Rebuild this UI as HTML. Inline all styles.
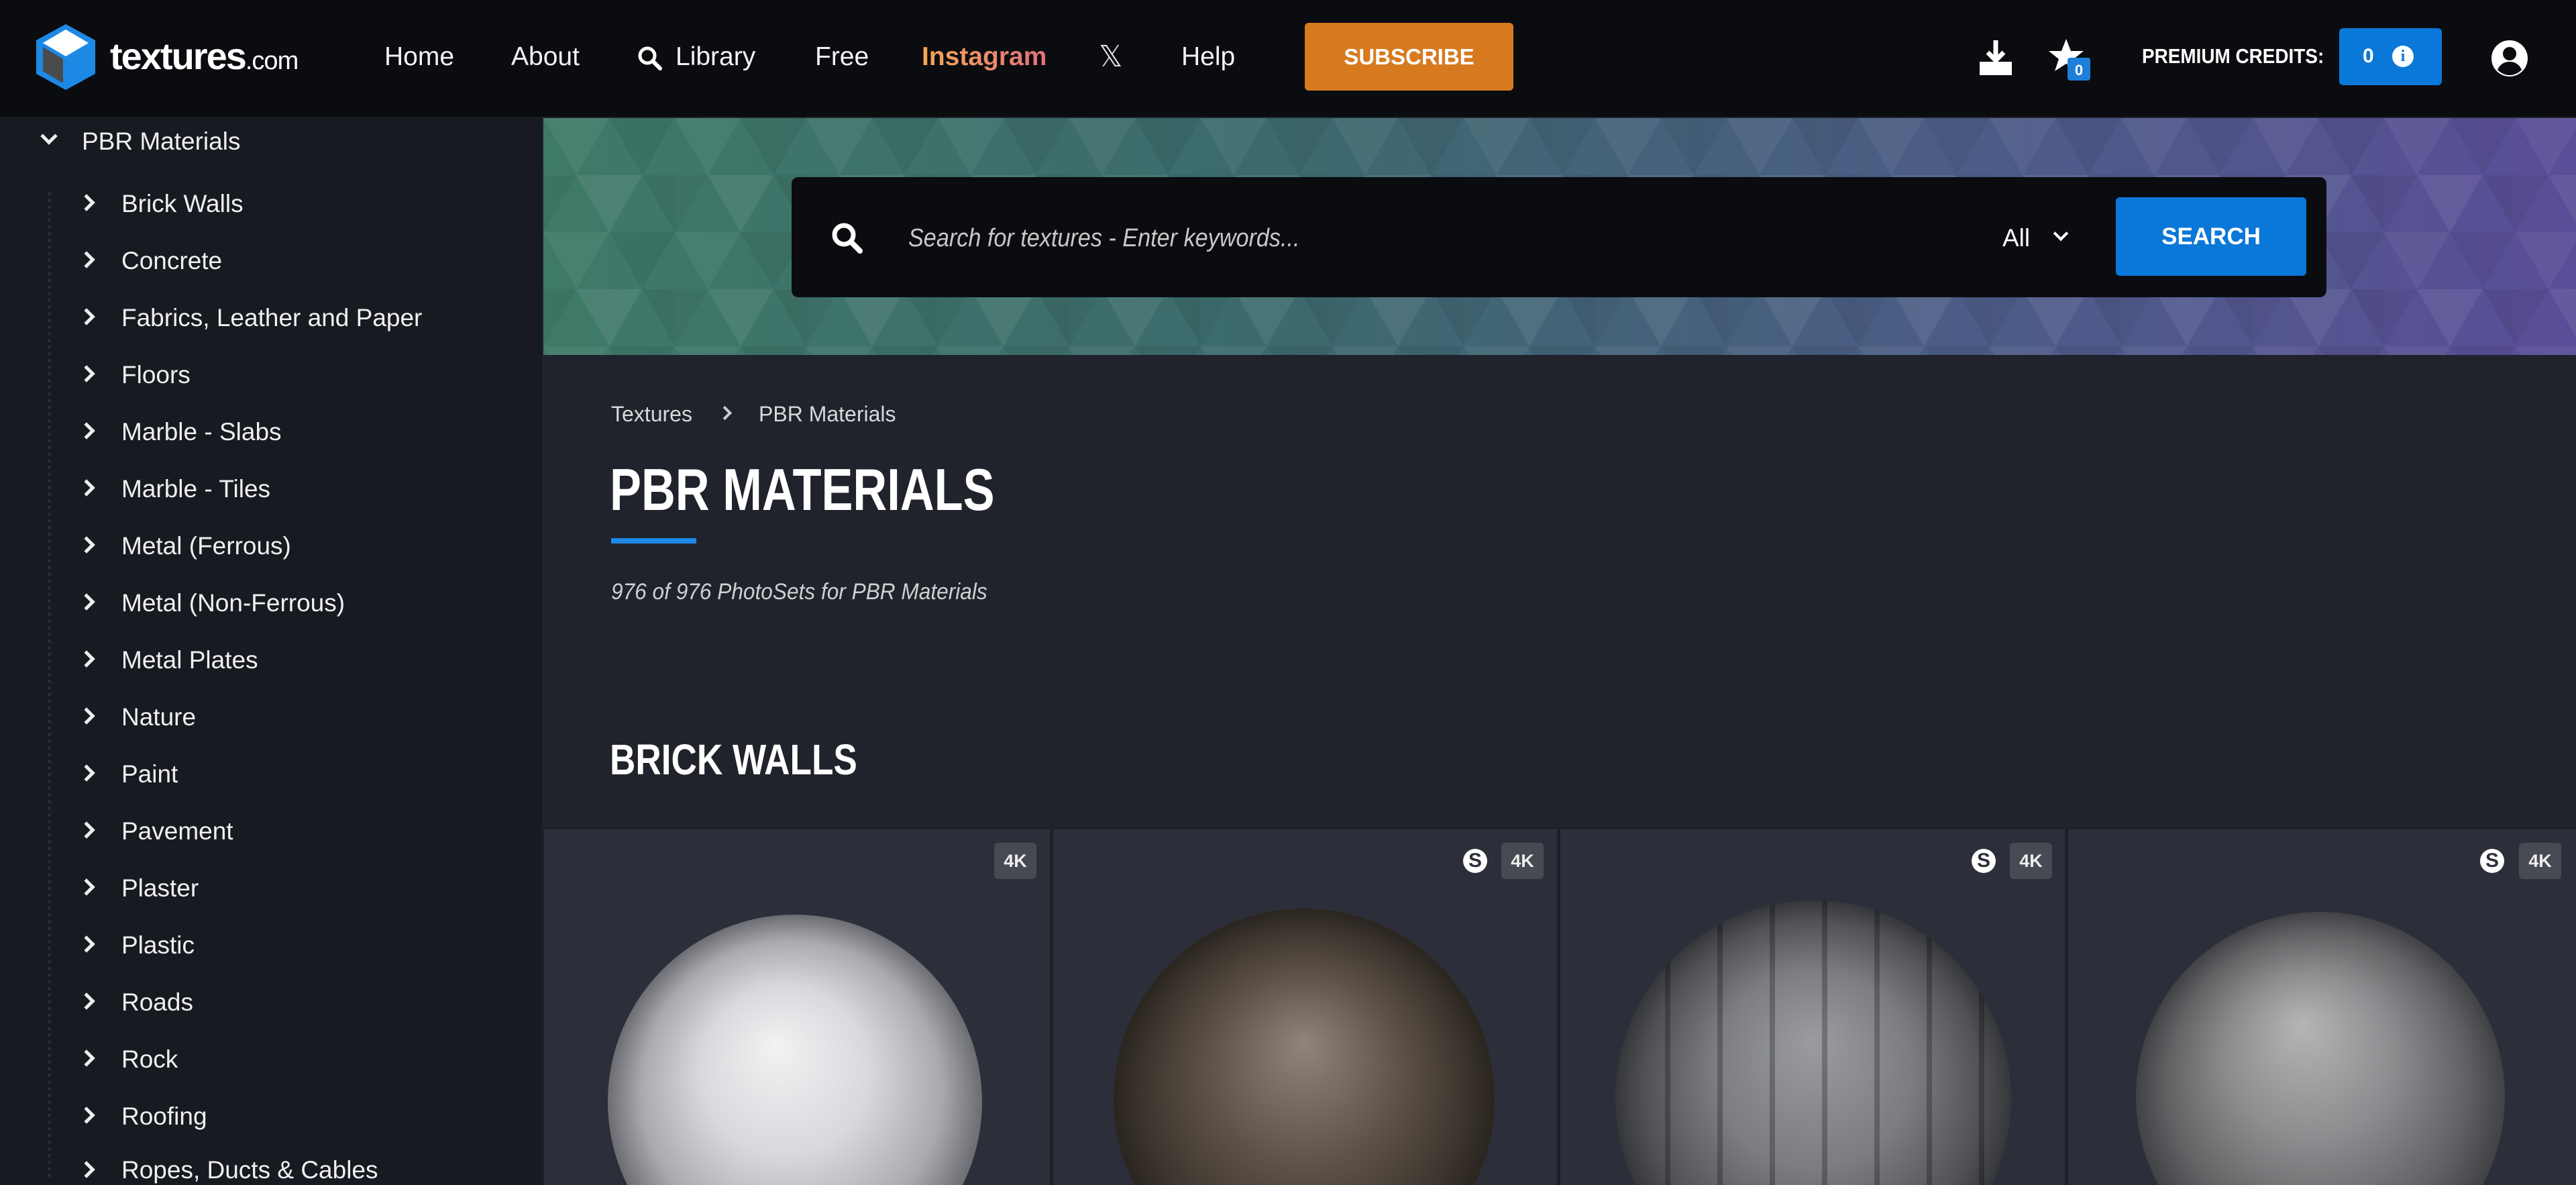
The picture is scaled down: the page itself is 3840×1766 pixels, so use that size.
<!DOCTYPE html>
<html style="width:3840px;height:1766px;overflow:hidden"><head><meta charset="utf-8">
<style>
*{margin:0;padding:0;box-sizing:border-box}
body{width:3840px;height:1766px;overflow:hidden;background:#20232c;font-family:"Liberation Sans",sans-serif;color:#fff}
#wrap{position:relative;width:3840px;height:1766px;overflow:hidden}
.abs{position:absolute}
.hdr{left:0;top:0;width:3840px;height:174px;background:#0b0c10}
.nav{top:60px;font-size:39px;line-height:50px;color:#f2f2f2}
.side{left:0;top:174px;width:808px;height:1592px;background:#181a21;overflow:hidden}
.si{left:0;font-size:37px;line-height:50px;height:50px;color:#f0f0f0;width:800px}
.si .ch{position:absolute;left:120px;top:14px;width:18px;height:18px;border-right:5px solid #eee;border-top:5px solid #eee;transform:rotate(45deg)}
.si span{position:absolute;left:181px;white-space:nowrap}
.cards{left:808px;top:1232px;width:3032px;height:534px;background:#1d2028;overflow:hidden}
.card{top:4px;height:530px;background:#2c2f39}
.b4k{width:63px;height:54px;background:#474a52;border-radius:6px;font-size:27px;font-weight:bold;text-align:center;line-height:54px;color:#eee}
.sic{width:36px;height:36px;border-radius:50%;background:#fff;color:#2c2f39;font-weight:bold;font-size:30px;text-align:center;line-height:36px}
.cond{transform:scaleX(0.8);transform-origin:0 0;white-space:nowrap}
</style></head><body><div id="wrap">
<div class="abs hdr"></div>
<svg class="abs" style="left:52px;top:34px" width="92" height="102" viewBox="0 0 92 102">
<polygon points="46,2 90,26 90,76 46,100 2,76 2,26" fill="#1e88e5"/>
<polygon points="46,10 80,30 46,50 12,30" fill="#fff"/>
<polygon points="12,36 42,54 42,90 12,72" fill="#4a4a4a"/>
</svg>
<div class="abs" style="left:164px;top:52px;font-size:56px;font-weight:bold;letter-spacing:-2px;line-height:64px">textures<span style="font-size:38px;letter-spacing:-1px;font-weight:normal">.com</span></div>
<div class="abs nav" style="left:573px">Home</div>
<div class="abs nav" style="left:762px">About</div>
<svg class="abs" style="left:950px;top:68px" width="38" height="38" viewBox="0 0 38 38"><circle cx="15" cy="15" r="11" fill="none" stroke="#fff" stroke-width="5"/><line x1="23" y1="23" x2="34" y2="34" stroke="#fff" stroke-width="6" stroke-linecap="round"/></svg>
<div class="abs nav" style="left:1007px">Library</div>
<div class="abs nav" style="left:1215px">Free</div>
<div class="abs nav" style="left:1374px;font-weight:bold;background:linear-gradient(90deg,#f5a855,#e2707c);-webkit-background-clip:text;color:transparent">Instagram</div>
<div class="abs nav" style="left:1638px;font-size:44px;color:#ddd">𝕏</div>
<div class="abs nav" style="left:1761px">Help</div>
<div class="abs" style="left:1945px;top:34px;width:311px;height:101px;background:#d77a1f;border-radius:6px;font-size:33px;font-weight:bold;text-align:center;line-height:101px">SUBSCRIBE</div>
<svg class="abs" style="left:2948px;top:58px" width="54" height="56" viewBox="0 0 54 56"><path d="M27 2v28M15 20l12 12 12-12" stroke="#fff" stroke-width="7" fill="none"/><rect x="3" y="34" width="48" height="20" fill="#fff"/></svg>
<svg class="abs" style="left:3054px;top:56px" width="66" height="66" viewBox="0 0 66 66"><polygon points="26,2 33,20 52,20 37,32 43,50 26,39 9,50 15,32 0,20 19,20" fill="#fff"/><rect x="28" y="30" width="34" height="34" rx="4" fill="#1e7fd8"/><text x="45" y="56" font-size="22" font-weight="bold" fill="#fff" text-anchor="middle" font-family="Liberation Sans">0</text></svg>
<div class="abs" style="left:3193px;top:62px;font-size:31px;font-weight:bold;line-height:44px;transform:scaleX(0.9);transform-origin:0 0;white-space:nowrap">PREMIUM CREDITS:</div>
<div class="abs" style="left:3487px;top:42px;width:153px;height:85px;background:#0a78d8;border-radius:6px"></div>
<div class="abs" style="left:3522px;top:62px;font-size:30px;font-weight:bold;line-height:44px">0</div>
<div class="abs" style="left:3566px;top:68px;width:32px;height:32px;border-radius:50%;background:#fff;color:#0a78d8;font-weight:bold;font-size:24px;text-align:center;line-height:32px;font-family:'Liberation Serif',serif">i</div>
<svg class="abs" style="left:3712px;top:58px" width="58" height="58" viewBox="0 0 58 58"><circle cx="29" cy="29" r="27" fill="#fff"/><circle cx="29" cy="22" r="10" fill="#0b0c10"/><path d="M11 46c4-9 11-12 18-12s14 3 18 12c-5 5-11 8-18 8s-13-3-18-8z" fill="#0b0c10"/></svg>

<div class="abs side">
<div class="abs" style="left:71px;top:112px;height:1470px;border-left:5px dotted #2a2d36"></div>
<div class="abs si" style="top:12px"><div class="ch" style="left:64px;top:8px;transform:rotate(135deg)"></div><span style="left:122px">PBR Materials</span></div>
<div class="abs si" style="top:105px"><div class="ch"></div><span>Brick Walls</span></div>
<div class="abs si" style="top:190px"><div class="ch"></div><span>Concrete</span></div>
<div class="abs si" style="top:275px"><div class="ch"></div><span>Fabrics, Leather and Paper</span></div>
<div class="abs si" style="top:360px"><div class="ch"></div><span>Floors</span></div>
<div class="abs si" style="top:445px"><div class="ch"></div><span>Marble - Slabs</span></div>
<div class="abs si" style="top:530px"><div class="ch"></div><span>Marble - Tiles</span></div>
<div class="abs si" style="top:615px"><div class="ch"></div><span>Metal (Ferrous)</span></div>
<div class="abs si" style="top:700px"><div class="ch"></div><span>Metal (Non-Ferrous)</span></div>
<div class="abs si" style="top:785px"><div class="ch"></div><span>Metal Plates</span></div>
<div class="abs si" style="top:870px"><div class="ch"></div><span>Nature</span></div>
<div class="abs si" style="top:955px"><div class="ch"></div><span>Paint</span></div>
<div class="abs si" style="top:1040px"><div class="ch"></div><span>Pavement</span></div>
<div class="abs si" style="top:1125px"><div class="ch"></div><span>Plaster</span></div>
<div class="abs si" style="top:1210px"><div class="ch"></div><span>Plastic</span></div>
<div class="abs si" style="top:1295px"><div class="ch"></div><span>Roads</span></div>
<div class="abs si" style="top:1380px"><div class="ch"></div><span>Rock</span></div>
<div class="abs si" style="top:1465px"><div class="ch"></div><span>Roofing</span></div>
<div class="abs si" style="top:1550px;height:40px;line-height:40px;overflow:hidden"><div class="ch" style="top:10px"></div><span>Ropes, Ducts &amp; Cables</span></div>
</div>

<svg class="abs" style="left:810px;top:176px" width="3030" height="353" viewBox="0 0 3030 353">
<defs>
<linearGradient id="g" x1="0" x2="1" y1="0" y2="0"><stop offset="0" stop-color="#3f7a68"/><stop offset="0.35" stop-color="#3c6a6c"/><stop offset="0.7" stop-color="#4c5c86"/><stop offset="1" stop-color="#5a4e98"/></linearGradient>
<pattern id="p" width="196" height="170" patternUnits="userSpaceOnUse">
<polygon points="0,0 98,0 49,85" fill="#fff" opacity="0.05"/>
<polygon points="98,0 196,0 147,85" fill="#000" opacity="0.06"/>
<polygon points="49,85 147,85 98,170" fill="#fff" opacity="0.07"/>
<polygon points="0,85 49,85 0,170" fill="#000" opacity="0.05"/>
<polygon points="147,85 196,85 196,170" fill="#000" opacity="0.07"/>
</pattern>
</defs>
<rect width="3030" height="353" fill="url(#g)"/>
<rect width="3030" height="353" fill="url(#p)"/>
</svg>
<div class="abs" style="left:1180px;top:264px;width:2288px;height:179px;background:#0b0c10;border-radius:10px"></div>
<svg class="abs" style="left:1238px;top:330px" width="50" height="50" viewBox="0 0 50 50"><circle cx="20" cy="20" r="14" fill="none" stroke="#fff" stroke-width="7"/><line x1="31" y1="31" x2="44" y2="44" stroke="#fff" stroke-width="8" stroke-linecap="round"/></svg>
<div class="abs" style="left:1354px;top:330px;font-size:38px;font-style:italic;color:#c8c8c8;line-height:50px;transform:scaleX(0.9);transform-origin:0 0;white-space:nowrap">Search for textures - Enter keywords...</div>
<div class="abs" style="left:2985px;top:330px;font-size:37px;line-height:50px">All</div>
<div class="abs" style="left:3064px;top:340px;width:16px;height:16px;border-right:4px solid #fff;border-bottom:4px solid #fff;transform:rotate(45deg)"></div>
<div class="abs" style="left:3154px;top:294px;width:284px;height:117px;background:#0a78d8;border-radius:6px;font-size:35px;font-weight:bold;text-align:center;line-height:117px">SEARCH</div>

<div class="abs" style="left:911px;top:596px;font-size:32px;color:#d8d8d8;line-height:42px">Textures</div>
<div class="abs" style="left:1073px;top:608px;width:15px;height:15px;border-right:4px solid #ccc;border-top:4px solid #ccc;transform:rotate(45deg)"></div>
<div class="abs" style="left:1131px;top:596px;font-size:32px;color:#d8d8d8;line-height:42px">PBR Materials</div>
<div class="abs cond" style="left:909px;top:680px;font-size:88px;font-weight:bold;line-height:100px">PBR MATERIALS</div>
<div class="abs" style="left:911px;top:802px;width:127px;height:8px;background:#1e88e5"></div>
<div class="abs" style="left:911px;top:860px;font-size:34px;font-style:italic;color:#d0d0d0;line-height:44px;transform:scaleX(0.93);transform-origin:0 0;white-space:nowrap">976 of 976 PhotoSets for PBR Materials</div>
<div class="abs" style="left:909px;top:1096px;font-size:64px;font-weight:bold;line-height:72px;transform:scaleX(0.83);transform-origin:0 0;white-space:nowrap">BRICK WALLS</div>

<div class="abs cards">
<div class="abs card" style="left:3px;width:754px"></div>
<div class="abs card" style="left:762px;width:751px"></div>
<div class="abs card" style="left:1518px;width:752px"></div>
<div class="abs card" style="left:2275px;width:757px"></div>

<svg class="abs" style="left:0;top:0" width="3032" height="534" viewBox="0 0 3032 534">
<defs>
<radialGradient id="s1" cx="0.5" cy="0.5" r="0.5" fx="0.45" fy="0.35"><stop offset="0" stop-color="#f2f2f4"/><stop offset="0.45" stop-color="#d8d9dc"/><stop offset="0.8" stop-color="#a9aaae"/><stop offset="1" stop-color="#6c6d72"/></radialGradient>
<radialGradient id="s2" cx="0.5" cy="0.5" r="0.5" fx="0.5" fy="0.35"><stop offset="0" stop-color="#8f857a"/><stop offset="0.5" stop-color="#5e5348"/><stop offset="0.85" stop-color="#3c342d"/><stop offset="1" stop-color="#2a2520"/></radialGradient>
<radialGradient id="s3" cx="0.5" cy="0.5" r="0.5" fx="0.5" fy="0.35"><stop offset="0" stop-color="#9a9ca0"/><stop offset="0.5" stop-color="#7b7d82"/><stop offset="0.85" stop-color="#505257"/><stop offset="1" stop-color="#35373b"/></radialGradient>
<radialGradient id="s4" cx="0.5" cy="0.5" r="0.5" fx="0.45" fy="0.3"><stop offset="0" stop-color="#b5b5b7"/><stop offset="0.45" stop-color="#8d8d90"/><stop offset="0.8" stop-color="#636366"/><stop offset="1" stop-color="#414245"/></radialGradient>
<clipPath id="c3"><circle cx="1895" cy="405" r="295"/></clipPath>
</defs>
<circle cx="377" cy="410" r="279" fill="url(#s1)"/>
<circle cx="1136" cy="406" r="284" fill="url(#s2)"/>
<circle cx="1895" cy="405" r="295" fill="url(#s3)"/>
<g clip-path="url(#c3)" stroke="rgba(0,0,0,0.25)" stroke-width="8">
<line x1="1678" y1="0" x2="1678" y2="534"/><line x1="1756" y1="0" x2="1756" y2="534"/><line x1="1834" y1="0" x2="1834" y2="534"/><line x1="1912" y1="0" x2="1912" y2="534"/><line x1="1990" y1="0" x2="1990" y2="534"/><line x1="2068" y1="0" x2="2068" y2="534"/><line x1="2146" y1="0" x2="2146" y2="534"/>
</g>
<circle cx="2651" cy="402" r="275" fill="url(#s4)"/>
</svg>

<div class="abs b4k" style="left:674px;top:24px">4K</div>
<div class="abs sic" style="left:1373px;top:33px">S</div>
<div class="abs b4k" style="left:1430px;top:24px">4K</div>
<div class="abs sic" style="left:2131px;top:33px">S</div>
<div class="abs b4k" style="left:2188px;top:24px">4K</div>
<div class="abs sic" style="left:2889px;top:33px">S</div>
<div class="abs b4k" style="left:2947px;top:24px">4K</div>
</div>
</div></body></html>
